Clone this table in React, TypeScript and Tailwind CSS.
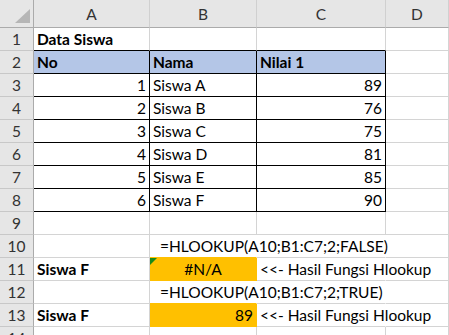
import React from "react";

type Cell = {
  t?: string;
  align?: "left" | "right" | "center";
  bold?: boolean;
  bg?: string;
  pad?: string;
  flag?: boolean;
};

const GRID = "#d4d4d4";
const BLACK = "#000000";
const BLUE = "#b4c6e7";
const ORANGE = "#ffc000";

const cols = ["A", "B", "C", "D"];
const colWidths = ["w-[116px]", "w-[107px]", "w-[129px]", "flex-1"];

const hdr = (t: string): Cell => ({ t, bold: true, bg: BLUE });
const num = (t: string): Cell => ({ t, align: "right" });
const txt = (t: string): Cell => ({ t });

const rows: Cell[][] = [
  [{ t: "Data Siswa", bold: true }, {}, {}, {}],
  [hdr("No"), hdr("Nama"), hdr("Nilai 1"), {}],
  [num("1"), txt("Siswa A"), num("89"), {}],
  [num("2"), txt("Siswa B"), num("76"), {}],
  [num("3"), txt("Siswa C"), num("75"), {}],
  [num("4"), txt("Siswa D"), num("81"), {}],
  [num("5"), txt("Siswa E"), num("85"), {}],
  [num("6"), txt("Siswa F"), num("90"), {}],
  [{}, {}, {}, {}],
  [{}, { t: "=HLOOKUP(A10;B1:C7;2;FALSE)", pad: "pl-[7px]" }, {}, {}],
  [
    { t: "Siswa F", bold: true },
    { t: "#N/A", align: "center", bg: ORANGE, flag: true },
    txt("<<- Hasil Fungsi Hlookup"),
    {},
  ],
  [{}, { t: "=HLOOKUP(A10;B1:C7;2;TRUE)", pad: "pl-[7px]" }, {}, {}],
  [
    { t: "Siswa F", bold: true },
    { t: "89", align: "right", bg: ORANGE },
    txt("<<- Hasil Fungsi Hlookup"),
    {},
  ],
  [{}, {}, {}, {}],
];

// Gridline colour on the right edge of a cell (r = 1-based row, c = 0-based col)
function rightColor(r: number, c: number, cell: Cell): string {
  if (r >= 2 && r <= 8 && c <= 2) return BLACK;
  if (cell.bg === ORANGE) return ORANGE;
  // text spilling into the next column hides the gridline
  if ((r === 10 || r === 12) && (c === 1 || c === 2)) return "transparent";
  if ((r === 11 || r === 13) && c === 2) return "transparent";
  return GRID;
}

function bottomColor(r: number, c: number, cell: Cell): string {
  if (r >= 1 && r <= 8 && c <= 2) return BLACK;
  if (cell.bg === ORANGE) return ORANGE;
  if ((r === 10 || r === 12) && c === 1) return ORANGE;
  return GRID;
}

function SheetCell({ cell, r, c }: { cell: Cell; r: number; c: number }) {
  const justify =
    cell.align === "right"
      ? "justify-end"
      : cell.align === "center"
      ? "justify-center"
      : "justify-start";
  return (
    <div
      className={`relative flex h-full items-center overflow-visible whitespace-nowrap border-r border-b px-[3px] ${colWidths[c]} ${justify} ${cell.bold ? "font-bold" : ""}`}
      style={{
        backgroundColor: cell.bg,
        borderRightColor: rightColor(r, c, cell),
        borderBottomColor: bottomColor(r, c, cell),
      }}
    >
      {cell.flag && (
        <svg className="absolute left-0 top-0" width="7" height="7" viewBox="0 0 7 7">
          <polygon points="0,0 7,0 0,7" fill="#1a8a1a" />
        </svg>
      )}
      {cell.t && <span className={`relative z-10 pt-[1px] ${cell.pad ?? ""}`}>{cell.t}</span>}
    </div>
  );
}

export default function App() {
  return (
    <div
      className="h-[335px] w-[449px] overflow-hidden bg-white text-[15.5px] text-black"
      style={{ fontFamily: "Lato, 'Open Sans', sans-serif" }}
    >
      {/* column header band */}
      <div className="flex h-[28px] bg-[#e6e6e6]">
        <div className="relative w-[34px] shrink-0 border-r border-b border-r-[#ababab] border-b-[#ababab]">
          <svg className="absolute bottom-[4px] right-[3px]" width="15" height="14" viewBox="0 0 15 14">
            <polygon points="15,0 15,14 0,14" fill="#b6b6b6" />
          </svg>
        </div>
        {cols.map((l, i) => (
          <div
            key={l}
            className={`flex items-center justify-center border-r border-b border-r-[#d0d0d0] border-b-[#ababab] pt-[2px] text-[#333333] ${colWidths[i]}`}
          >
            {l}
          </div>
        ))}
      </div>

      {rows.map((row, ri) => {
        const r = ri + 1;
        return (
          <div key={r} className="flex h-[23px]">
            <div className="flex w-[34px] shrink-0 items-center justify-center border-r border-b border-r-[#ababab] border-b-[#c8c8c8] bg-[#e6e6e6] pt-[1px] text-[#333333]">
              {r}
            </div>
            {row.map((cell, c) => (
              <SheetCell key={c} cell={cell} r={r} c={c} />
            ))}
          </div>
        );
      })}
    </div>
  );
}
